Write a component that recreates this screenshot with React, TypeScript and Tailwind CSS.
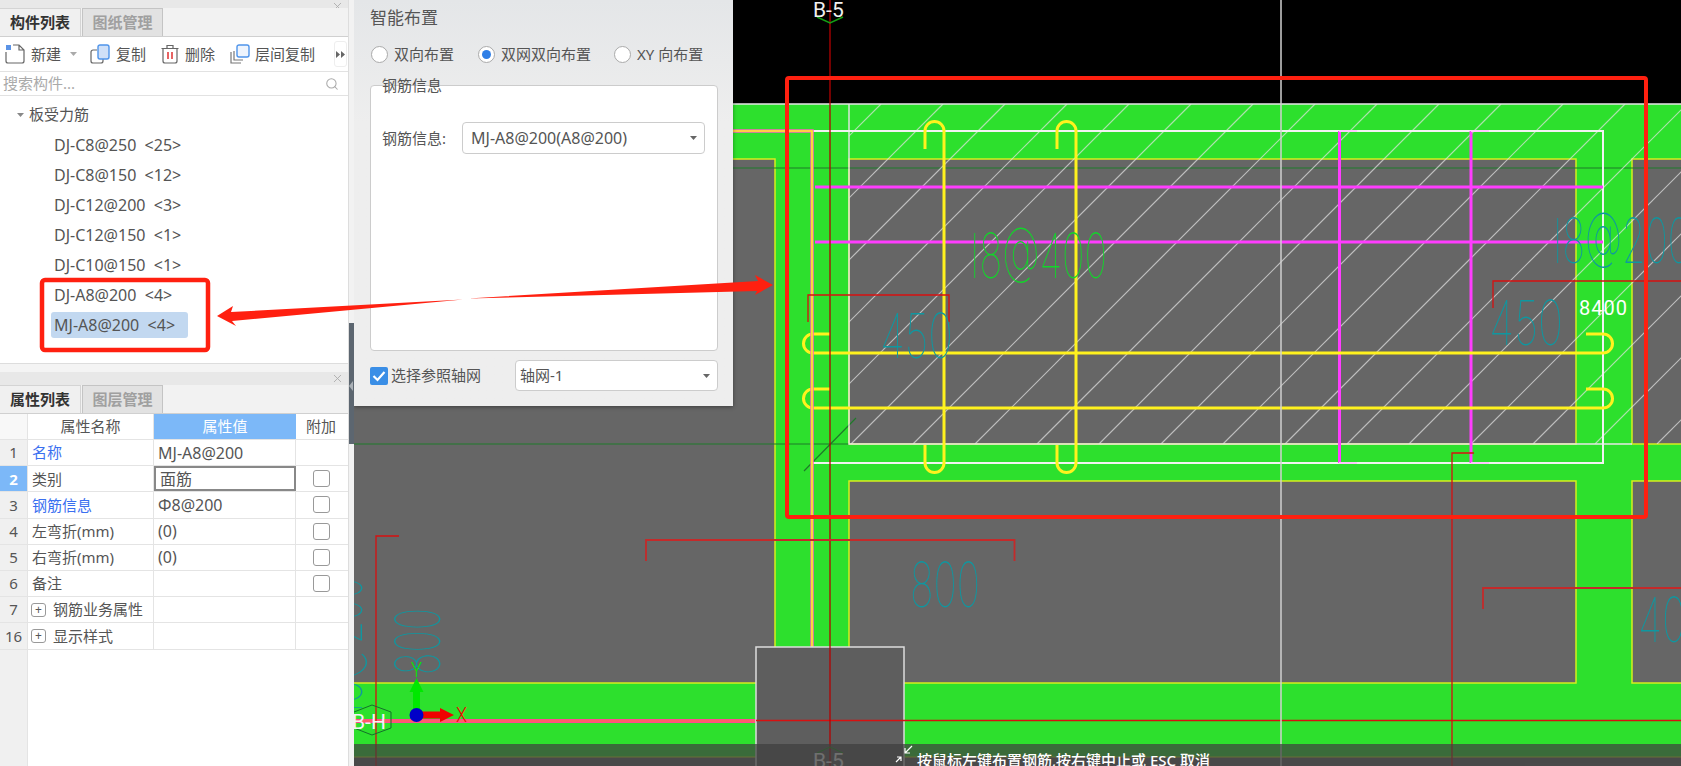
import { X, Search } from "lucide-react";

const TREE = [
  "DJ-C8@250 <25>",
  "DJ-C8@150 <12>",
  "DJ-C12@200 <3>",
  "DJ-C12@150 <1>",
  "DJ-C10@150 <1>",
  "DJ-A8@200 <4>",
];

type Row = { n: string; name: string; value: string; blue?: boolean; check?: boolean; active?: boolean; plus?: boolean };
const ROWS: Row[] = [
  { n: "1", name: "名称", value: "MJ-A8@200", blue: true },
  { n: "2", name: "类别", value: "面筋", check: true, active: true },
  { n: "3", name: "钢筋信息", value: "Φ8@200", blue: true, check: true },
  { n: "4", name: "左弯折(mm)", value: "(0)", check: true },
  { n: "5", name: "右弯折(mm)", value: "(0)", check: true },
  { n: "6", name: "备注", value: "", check: true },
  { n: "7", name: "钢筋业务属性", value: "", plus: true },
  { n: "16", name: "显示样式", value: "", plus: true },
];

const HATCH = Array.from({ length: 30 }, (_, i) => 985 + 62 * i);

function NewIcon() {
  return (
    <svg width="20" height="20" viewBox="0 0 20 20" className="shrink-0">
      <path d="M1 8v9a2 2 0 0 0 2 2h14a2 2 0 0 0 2-2V6l-5-5H8M14 1v5h5" fill="none" stroke="#666" strokeWidth="1.2" />
      <rect x="1" y="1" width="5" height="5" fill="#5b93e6" />
    </svg>
  );
}
function CopyIcon() {
  return (
    <svg width="20" height="20" viewBox="0 0 20 20" className="shrink-0">
      <path d="M7 6H3a2 2 0 0 0-2 2v9a2 2 0 0 0 2 2h8a2 2 0 0 0 2-2v-2" fill="none" stroke="#666" strokeWidth="1.2" />
      <rect x="8" y="1" width="11" height="14" rx="2" fill="#cfe0f8" stroke="#4f94ea" strokeWidth="1.4" />
    </svg>
  );
}
function TrashIcon() {
  return (
    <svg width="18" height="20" viewBox="0 0 18 20" className="shrink-0">
      <path d="M2 5v12a2 2 0 0 0 2 2h10a2 2 0 0 0 2-2V5M0.500 4.500h17M6 4V1.500h6V4" fill="none" stroke="#666" strokeWidth="1.2" />
      <path d="M7 8v7M11 8v7" stroke="#e03030" strokeWidth="1.5" />
    </svg>
  );
}
function LayerIcon() {
  return (
    <svg width="20" height="20" viewBox="0 0 20 20" className="shrink-0">
      <path d="M1 8v11h10M4 7v9h9" fill="none" stroke="#777" strokeWidth="1.2" />
      <rect x="7" y="1" width="12" height="12" rx="2" fill="#eef4fd" stroke="#4f94ea" strokeWidth="1.4" />
    </svg>
  );
}
function Caret({ color = "#666" }: { color?: string }) {
  return (
    <svg width="7" height="4" viewBox="0 0 7 4" className="shrink-0">
      <path d="M0 0h7L3.500 4z" fill={color} />
    </svg>
  );
}
function Radio({ on }: { on?: boolean }) {
  return (
    <span className="flex h-[17px] w-[17px] shrink-0 items-center justify-center rounded-full border border-[#aaaaaa] bg-white">
      {on && <span className="h-[9px] w-[9px] rounded-full bg-[#2f7fe6]" />}
    </span>
  );
}
function Box() {
  return <span className="h-[17px] w-[17px] rounded-[3px] border border-[#999999] bg-white" />;
}
function Tabs({ a, b }: { a: string; b: string }) {
  return (
    <div className="flex h-[29px] items-end border-b border-[#d0d0d0] bg-[#f2f2f2] text-[15px] font-bold">
      <div className="flex h-[28px] w-[81px] items-center justify-center border-t border-r border-[#d4d4d4] bg-[#f0f0f0] text-[#333333]">{a}</div>
      <div className="ml-px flex h-[28px] w-[81px] items-center justify-center border border-b-0 border-[#c4c4c4] bg-[#e2e2e2] text-[#a0a0a0]">{b}</div>
    </div>
  );
}
function CloseBar({ h }: { h: string }) {
  return (
    <div className={`${h} flex justify-end overflow-hidden bg-[#e8e8e8] pr-[4px]`}>
      <X size={13} strokeWidth={1.6} className="shrink-0 text-[#aaaaaa]" />
    </div>
  );
}

function CadText(p: { x: number; y: number; w: number; t: string; size?: number; fill?: string; transform?: string }) {
  return (
    <text
      x={p.x}
      y={p.y}
      fontFamily="Inter, sans-serif"
      fontWeight={100}
      fontSize={p.size ?? 62}
      fill={p.fill ?? "#0f97a0"}
      textLength={p.w}
      lengthAdjust="spacingAndGlyphs"
      transform={p.transform}
    >
      {p.t}
    </text>
  );
}

function Drawing() {
  const Y = "#d6ee1e";
  const G = "#2de02d";
  const GR = "#666666";
  return (
    <svg width="1327" height="766" viewBox="354 0 1327 766" className="block">
      <defs>
        <clipPath id="hatch">
          <rect x="849" y="104" width="832" height="340" />
        </clipPath>
      </defs>
      <rect x="354" y="0" width="1327" height="104" fill="#000" />
      <rect x="354" y="104" width="1327" height="653" fill={G} />
      <rect x="354" y="757" width="1327" height="9" fill={GR} />
      <g fill={GR} stroke={Y} strokeWidth="1.5">
        <rect x="340" y="159" width="435" height="524" />
        <rect x="849" y="159" width="727" height="285" />
        <rect x="849" y="481" width="727" height="202" />
        <rect x="1632" y="159" width="60" height="285" />
        <rect x="1632" y="481" width="60" height="202" />
      </g>
      <path d="M354 757H1681" stroke={Y} strokeWidth="1" />
      {/* axis helper lines */}
      <path d="M354 168H1681M354 444H849M804 471L856 418" stroke="#1f7a2a" strokeWidth="1.2" fill="none" />
      {/* hatch */}
      <g clipPath="url(#hatch)" stroke="#e4e4e4" strokeOpacity="0.7" strokeWidth="1.2">
        {HATCH.map((c) => (
          <line key={c} x1={c - 104} y1="104" x2={c - 444} y2="444" />
        ))}
      </g>
      <path d="M733 104H1681M849 104V444H1632" stroke="#e6e6e6" strokeWidth="1.4" fill="none" />
      {/* white outline */}
      <path d="M813 131H1603V463H813" stroke="#f2f2f2" strokeWidth="2" fill="none" />
      {/* magenta bars */}
      <path d="M815 187H1603M815 242H1603" stroke="#ff3cff" strokeWidth="3" />
      <path d="M1339.500 131V463M1471 131V463" stroke="#ff3cff" strokeWidth="3" fill="none" />
      <path d="M1339 131H1357M1471 131H1489M1339 463H1357M1471 463H1489" stroke="#ffc8ff" strokeWidth="2" fill="none" />
      {/* yellow rebars */}
      <g stroke="#fff21e" strokeWidth="3" fill="none">
        <path d="M830 334H813A9.500 9.500 0 0 0 813 353H1603A9.500 9.500 0 0 0 1603 334H1586" />
        <path d="M830 389H813A9.500 9.500 0 0 0 813 408H1603A9.500 9.500 0 0 0 1603 389H1586" />
        <path d="M925 149V131A9.500 9.500 0 0 1 944 131V463A9.500 9.500 0 0 1 925 463V445" />
        <path d="M1057 149V131A9.500 9.500 0 0 1 1076 131V463A9.500 9.500 0 0 1 1057 463V445" />
      </g>
      {/* pink beam outline */}
      <path d="M733 131H812V647" stroke="#ff60c0" strokeWidth="3.500" fill="none" />
      <path d="M733 131H812V647" stroke="#fff21e" strokeWidth="1.600" fill="none" />
      <path d="M354 721H756" stroke="#ff4a90" strokeWidth="4" />
      <path d="M354 721H756" stroke="#ff7040" strokeWidth="1.200" />
      {/* pedestal */}
      <rect x="756" y="647" width="148" height="130" fill="#5e5e5e" stroke="#dddddd" strokeWidth="1.500" />
      {/* red dims */}
      <g stroke="#d81010" strokeWidth="1.300" fill="none">
        <path d="M756 720.500H1681" />
        <path d="M830 0V766" stroke="#b40000" />
        <path d="M808 322V295H949V322" />
        <path d="M1493 308V281H1681" />
        <path d="M399 536H376V766" />
        <path d="M646 561V540H1014.500V561" strokeWidth="1.800" stroke="#c42a2a" />
        <path d="M1483 609V588H1681" strokeWidth="1.800" stroke="#c42a2a" />
        <path d="M1474 453H1452V766" />
      </g>
      <path d="M1281 0V766" stroke="#d0d0d0" strokeWidth="1.500" />
      {/* annotation text */}
      <CadText x={970} y={278} w={137} t="I8@400" fill="#12d62a" />
      <CadText x={880} y={358} w={73} t="450" />
      <CadText x={1489} y={345} w={74} t="450" />
      <CadText x={1553} y={263} w={137} t="I8@200" />
      <CadText x={910} y={607} w={70} t="800" />
      <CadText x={1638} y={642} w={48} t="40" />
      <CadText x={0} y={0} w={67} t="800" transform="translate(440 675) rotate(-90)" />
      <CadText x={0} y={0} w={135} t="I8@200" transform="translate(362 712) rotate(-90)" />
      {/* axis markers */}
      <path d="M817 17L830 23L843 17" stroke="#14a014" strokeWidth="1.500" fill="none" />
      <path d="M817 753L830 747L843 753" stroke="#14a014" strokeWidth="1" fill="none" />
      <path d="M354 712L372 705L391 712V728L372 735L354 728" stroke="#14702a" strokeWidth="1" fill="none" />
      <text x="813" y="17" fontFamily="Roboto, sans-serif" fontSize="21" fill="#f0f0f0">B-5</text>
      <text x="813" y="768" fontFamily="Roboto, sans-serif" fontSize="21" fill="#f0f0f0">B-5</text>
      <text x="352" y="729" fontFamily="Roboto, sans-serif" fontSize="21" fill="#f4f4f4">B-H</text>
      <text x="1579" y="315" fontFamily="Roboto, sans-serif" fontSize="20" fill="#ffffff" textLength="48">8400</text>
      {/* gizmo */}
      <path d="M413 715V692H409.500L416.500 678L423.500 692H420V715Z" fill="#00e800" />
      <path d="M416 711.500H440V708L454 715L440 722V718.500H416Z" fill="#f00000" />
      <circle cx="416.500" cy="715" r="7" fill="#0000c8" />
      <text x="456" y="722" fontFamily="Roboto, sans-serif" fontWeight={300} fontSize="20" fill="#f00000" textLength="11" lengthAdjust="spacingAndGlyphs">X</text>
      <text x="411" y="677" fontFamily="Roboto, sans-serif" fontWeight={300} fontSize="20" fill="#00e800" textLength="11" lengthAdjust="spacingAndGlyphs">Y</text>
    </svg>
  );
}

export default function App() {
  return (
    <div className="relative flex h-[766px] w-[1681px] overflow-hidden whitespace-nowrap bg-white font-['Noto_Sans','Noto_Sans_CJK_SC',sans-serif] text-[15px] text-[#555555]">
      {/* left side */}
      <div className="flex w-[349px] shrink-0 flex-col border-r border-[#dddddd] bg-white">
        <CloseBar h="h-[8px]" />
        <Tabs a="构件列表" b="图纸管理" />
        <div className="flex h-[35px] items-center border-b border-[#e2e2e2] pl-[5px]">
          <NewIcon />
          <span className="ml-[6px]">新建</span>
          <span className="ml-[9px]"><Caret color="#aaaaaa" /></span>
          <span className="ml-[13px]"><CopyIcon /></span>
          <span className="ml-[6px]">复制</span>
          <span className="ml-[15px]"><TrashIcon /></span>
          <span className="ml-[6px]">删除</span>
          <span className="ml-[15px]"><LayerIcon /></span>
          <span className="ml-[5px]">层间复制</span>
          <span className="ml-[19px] flex h-[26px] w-[13px] items-center justify-center rounded-[3px] border border-[#eeeeee]">
            <svg width="9" height="7" viewBox="0 0 9 7"><path d="M0 0l4 3.500L0 7zM5 0l4 3.500L5 7z" fill="#666666" /></svg>
          </span>
        </div>
        <div className="flex h-[24px] items-center justify-between border-b border-[#e2e2e2] pl-[3px] pr-[9px] text-[#aaaaaa]">
          <span>搜索构件...</span>
          <Search size={14} strokeWidth={1.8} className="text-[#aaaaaa]" />
        </div>
        <div className="h-[268px] border-b border-[#dddddd] pt-[3px]">
          <div className="flex h-[31px] items-center pl-[17px]">
            <Caret color="#888888" />
            <span className="ml-[5px]">板受力筋</span>
          </div>
          {TREE.map((t) => (
            <div key={t} className="flex h-[30px] items-center pl-[54px] text-[16px] whitespace-pre">{t.replace(" ", "  ")}</div>
          ))}
          <div className="my-[2px] ml-[51px] flex h-[26px] w-[137px] items-center rounded-[3px] bg-[#c2d8f0] pl-[3px] text-[16px] whitespace-pre">MJ-A8@200  {"<4>"}</div>
        </div>
        <div className="h-[8px] bg-[#f4f4f4]" />
        <CloseBar h="h-[13px]" />
        <Tabs a="属性列表" b="图层管理" />
        <div className="flex h-[26px] border-b border-[#e4e4e4]">
          <div className="w-[28px] shrink-0 border-r border-[#e4e4e4] bg-[#f8f8f8]" />
          <div className="flex w-[126px] shrink-0 items-center justify-center border-r border-[#e4e4e4]">属性名称</div>
          <div className="flex w-[142px] shrink-0 items-center justify-center bg-[#7cb8f8] text-white">属性值</div>
          <div className="flex w-[50px] shrink-0 items-center justify-center">附加</div>
        </div>
        {ROWS.map((r) => (
          <div key={r.n} className="flex h-[26.200px] border-b border-[#e4e4e4]">
            <div className={`flex w-[28px] shrink-0 items-center justify-center border-r border-[#e4e4e4] ${r.active ? "bg-[#7cb8f8] font-bold text-white" : "bg-[#f0f0f0]"}`}>{r.n}</div>
            <div className={`flex w-[126px] shrink-0 items-center border-r border-[#e4e4e4] pl-[4px] ${r.blue ? "text-[#3a6ff0]" : ""}`}>
              {r.plus && (
                <span className="mr-[7px] ml-[-1px] flex h-[14px] w-[15px] items-center justify-center rounded-[3px] border border-[#999999] text-[12px] leading-none">+</span>
              )}
              {r.name}
            </div>
            <div className={`flex w-[142px] shrink-0 items-center pl-[4px] text-[16px] ${r.active ? "border-2 border-[#888888] pl-[3px] text-[15px]" : "border-r border-[#e4e4e4]"}`}>{r.value}</div>
            <div className="flex w-[50px] shrink-0 items-center justify-center">{r.check && <Box />}</div>
          </div>
        ))}
        <div className="flex-1">
          <div className="h-full w-[28px] border-r border-[#e4e4e4] bg-[#f0f0f0]" />
        </div>
      </div>

      {/* splitter */}
      <div className="flex w-[5px] shrink-0 flex-col bg-[#f2f2f2]">
        <div className="h-[323px]" />
        <div className="flex h-[121px] items-center bg-[#5c6670]">
          <span className="mb-[-5px] h-0 w-0 border-y-[5px] border-r-[4px] border-y-transparent border-r-[#aab0b6]" />
        </div>
      </div>

      {/* canvas */}
      <div className="relative flex-1 overflow-hidden bg-black">
        <Drawing />

        {/* status hint */}
        <div className="absolute inset-x-0 bottom-0 flex h-[22px] items-start bg-[#3f3f3f]/[0.73] pl-[541px] pt-[6px] text-[15px] font-medium leading-[20px] text-white">
          <svg width="18" height="18" viewBox="0 0 18 18" className="mr-[4px] -mt-[5px] shrink-0" fill="none" stroke="#fff" strokeWidth="1.200">
            <path d="M17 1L10 8M10 3V8H15M1 17L6 12M2 12H6V16" />
          </svg>
          <span>按鼠标左键布置钢筋,按右键中止或 ESC 取消</span>
        </div>

        {/* floating dialog */}
        <div className="absolute left-0 top-0 flex h-[406px] w-[379px] flex-col bg-gradient-to-b from-[#e4e6e8] to-[#eeeeee] to-[30%] pl-[16px] pr-[15px] shadow-[0_1px_4px_rgba(0,0,0,0.4)]">
          <div className="flex h-[36px] items-center text-[17px]">智能布置</div>
          <div className="mt-[8px] flex h-[20px] items-center pl-px">
            <div className="flex w-[107px] items-center gap-[6px]"><Radio />双向布置</div>
            <div className="flex w-[136px] items-center gap-[6px]"><Radio on />双网双向布置</div>
            <div className="flex items-center gap-[6px]"><Radio />XY 向布置</div>
          </div>
          <div className="relative mt-[21px] h-[266px] w-[348px] rounded-[4px] border border-[#cccccc] bg-white">
            <span className="absolute -top-[11px] left-[11px] leading-[20px]">钢筋信息</span>
            <div className="mt-[36px] flex items-center pl-[11px]">
              <span className="w-[80px]">钢筋信息:</span>
              <div className="flex h-[32px] w-[243px] items-center justify-between rounded-[4px] border border-[#cccccc] pl-[8px] pr-[7px] text-[16px]">
                MJ-A8@200(A8@200)
                <Caret />
              </div>
            </div>
          </div>
          <div className="mt-[9px] flex h-[31px] items-center justify-between">
            <div className="flex items-center gap-[3px]">
              <span className="flex h-[18px] w-[18px] items-center justify-center rounded-[2px] bg-[#3a8ee6]">
                <svg width="14" height="12" viewBox="0 0 14 12"><path d="M1.500 6L5.500 10L12.500 2" fill="none" stroke="#fff" strokeWidth="2.200" /></svg>
              </span>
              选择参照轴网
            </div>
            <div className="flex h-[31px] w-[203px] items-center justify-between rounded-[4px] border border-[#cccccc] bg-white pl-[4px] pr-[7px]">
              轴网-1
              <Caret />
            </div>
          </div>
        </div>
      </div>

      {/* red markup laid over the whole screenshot */}
      <svg width="1681" height="766" viewBox="0 0 1681 766" className="pointer-events-none absolute inset-0">
        <rect x="42" y="280" width="166" height="70" rx="3" fill="none" stroke="#ff2010" strokeWidth="4.500" />
        <rect x="787" y="78" width="859" height="439" rx="2" fill="none" stroke="#ff2010" strokeWidth="4" />
        <polygon points="217,316 233,306 231,312 463,299.500 232,321 236,326" fill="#ff2010" />
        <polygon points="773,285 755,275 758,281 468,298.500 757,291 755,295" fill="#ff2010" />
      </svg>
    </div>
  );
}
